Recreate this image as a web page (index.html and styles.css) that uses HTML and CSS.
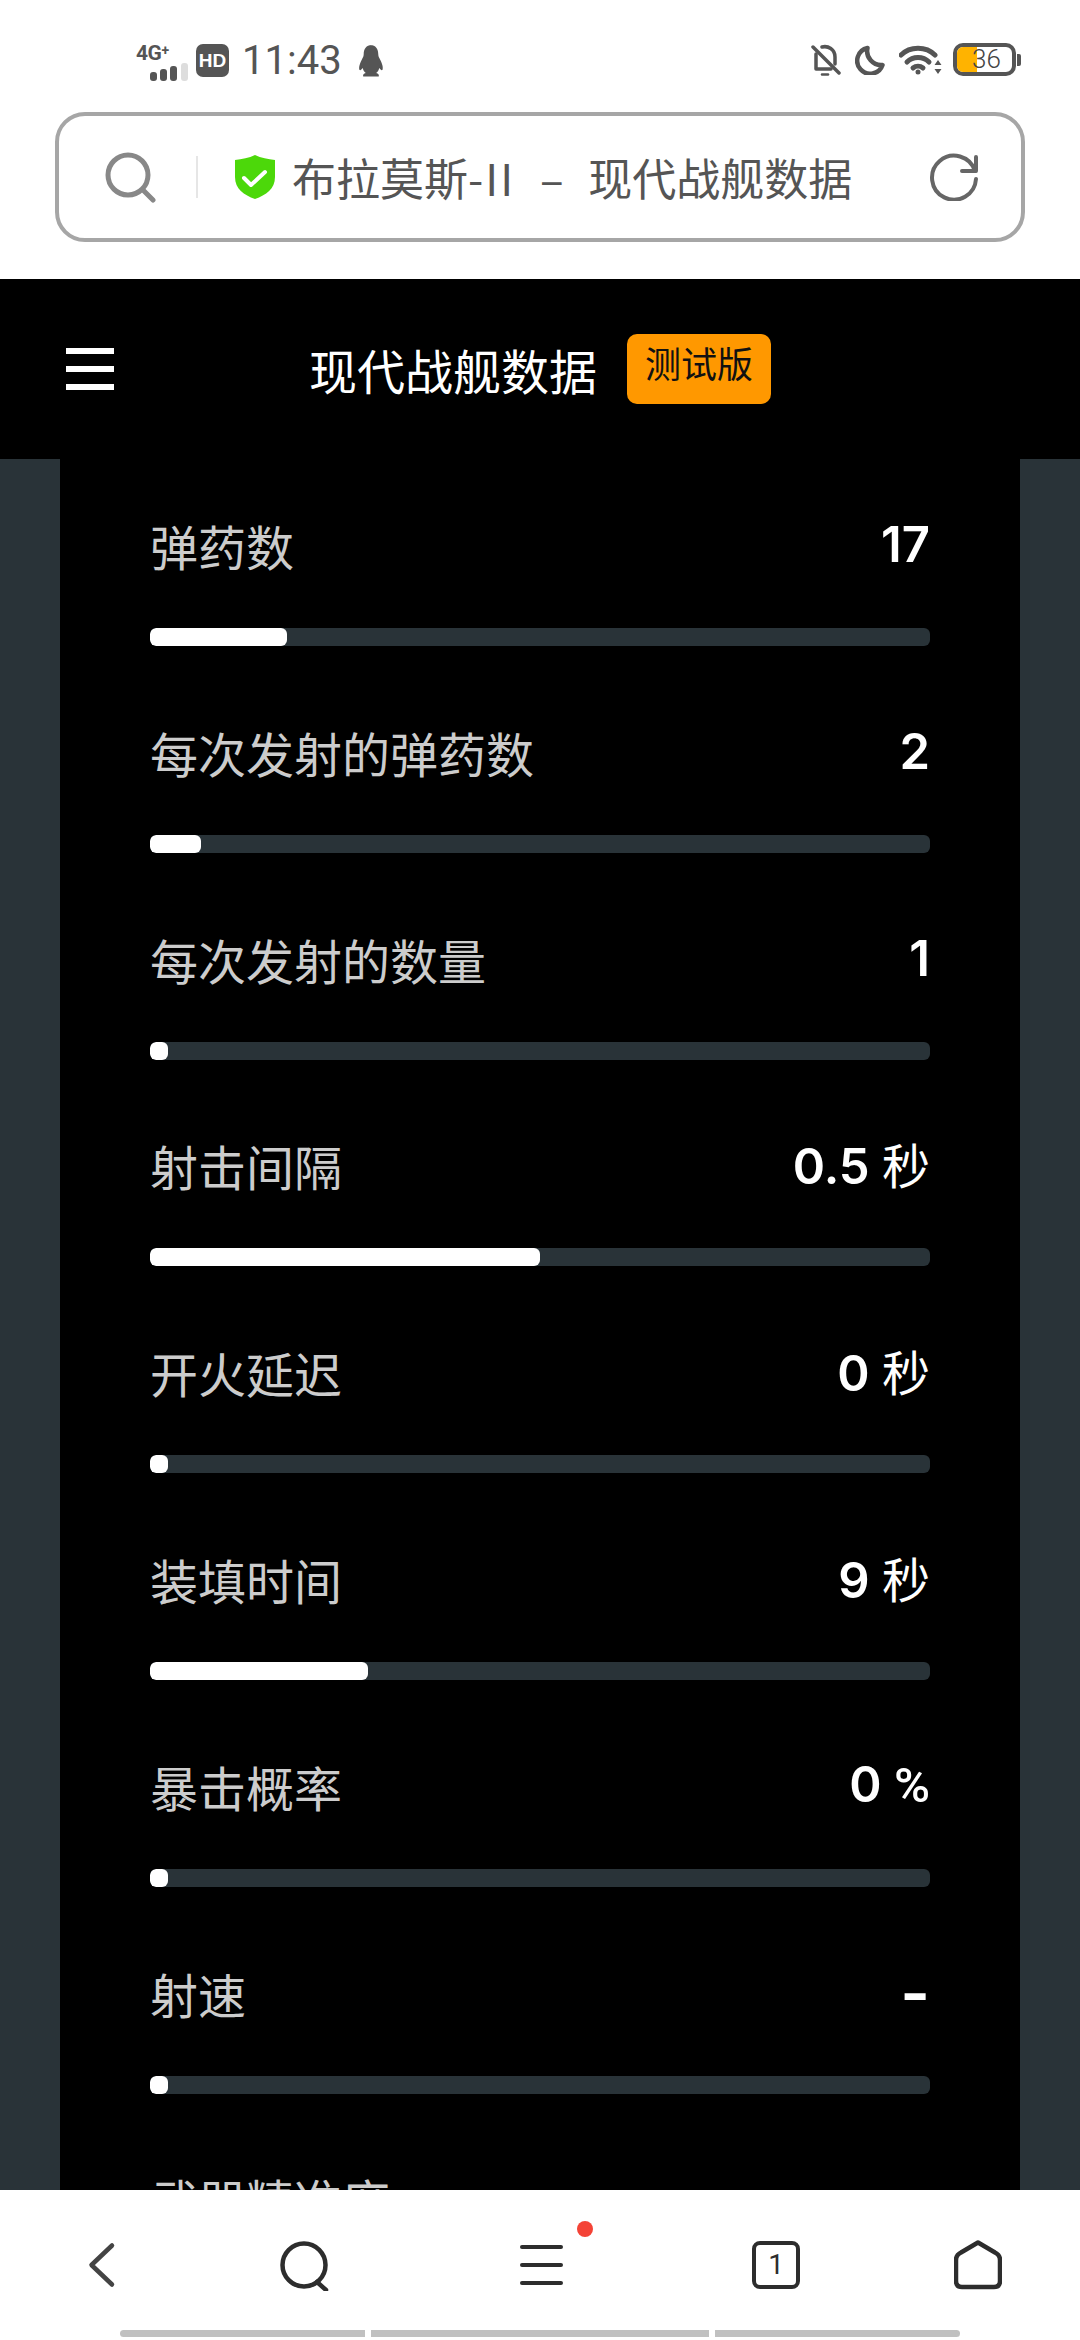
FILE: index.html
```html
<!DOCTYPE html>
<html lang="zh-CN">
<head>
    <meta charset="UTF-8">
    <meta name="viewport" content="width=device-width, initial-scale=1.0">
    <title>布拉莫斯-II - 现代战舰数据</title>
    <link rel="stylesheet" href="styles.css">
</head>
<body>
    <div class="status-bar">
        <div class="status-left">
            <div class="network">
                <span class="network-type">4G<small>+</small></span>
                <svg class="signal" width="38" height="18" viewBox="0 0 38 18">
                    <rect x="0" y="9" width="7" height="9" rx="3" fill="#555"/>
                    <rect x="10" y="6" width="7" height="12" rx="3" fill="#555"/>
                    <rect x="20" y="3" width="7" height="15" rx="3" fill="#555"/>
                    <rect x="31" y="0" width="7" height="18" rx="3" fill="#ddd"/>
                </svg>
            </div>
            <span class="hd">HD</span>
            <span class="clock">11:43</span>
            <svg class="penguin" width="27" height="32" viewBox="0 0 26 32" preserveAspectRatio="none">
                <path d="M13 0c-5 0-7.5 4-7.5 9 0 2-.5 3-2 6C1.5 19 .5 23 1.5 25c1 .5 2-.5 3-2 .5 2 1.500 4 3 5-2 .5-3 1.500-2.500 3.500h15c.5-2-.5-3-2.500-3.500 1.500-1 2.500-3 3-5 1 1.500 2 2.500 3 2 1-2 0-6-2-10-1.500-3-2-4-2-6 0-5-2.500-9-7.500-9z" fill="#555"/>
            </svg>
        </div>
        <div class="status-right">
            <svg class="bell" width="30" height="32" viewBox="0 0 30 32" fill="none" stroke="#555" stroke-width="3.500" stroke-linecap="round" stroke-linejoin="round">
                <path d="M11 3c6-1.500 13 2 13 10v7"/>
                <path d="M5 10v15h15"/>
                <path d="M2 3l26 26"/>
                <path d="M11 30.500h6" stroke-width="2.500"/>
            </svg>
            <svg class="moon" width="31" height="30" viewBox="0 0 30 30" fill="none" stroke="#555" stroke-width="4.500" stroke-linejoin="round">
                <path d="M12 3A13 13 0 1 0 27 20 14 14 0 0 1 12 3z"/>
            </svg>
            <svg class="wifi" width="43" height="30" viewBox="0 0 43 30" fill="none" stroke="#555" stroke-width="5" stroke-linecap="round">
                <path d="M2 10C11 1 27 1 36 10"/>
                <path d="M8 17C14 11 24 11 30 17"/>
                <path d="M14 23C17 20.500 21 20.500 24 23"/>
                <circle cx="19" cy="27" r="2.500" fill="#555" stroke="none"/>
                <path d="M39 15l3.500 5h-7zM39 29l3.500-5h-7z" fill="#555" stroke="none"/>
            </svg>
            <div class="battery">
                <div class="battery-body">
                    <div class="battery-level"></div>
                    <span class="battery-text">36</span>
                </div>
                <div class="battery-nub"></div>
            </div>
        </div>
    </div>

    <div class="browser-bar">
        <div class="address">
            <svg class="address-search" width="52" height="52" viewBox="0 0 52 52" fill="none" stroke="#888" stroke-width="5" stroke-linecap="round">
                <circle cx="23" cy="24" r="20"/>
                <path d="M38 39l10 10"/>
            </svg>
            <div class="address-divider"></div>
            <svg class="shield" width="40" height="44" viewBox="0 0 40 44">
                <path d="M20 0C26 3 33 4 40 5v17c0 12-9 18-20 22C9 40 0 34 0 22V5C7 4 14 3 20 0z" fill="#4cd80a"/>
                <path d="M9 23l7 7 14-13" fill="none" stroke="#fff" stroke-width="4" stroke-linecap="round" stroke-linejoin="round"/>
            </svg>
            <span class="address-text">布拉莫斯<span class="address-latin">-II</span> – 现代战舰数据</span>
            <svg class="refresh" width="48" height="48" viewBox="0 0 48 48" fill="none" stroke="#666" stroke-width="4" stroke-linecap="round" stroke-linejoin="round">
                <path d="M46 26A22 22 0 1 1 45 18"/>
                <path d="M46 4V18H32"/>
            </svg>
        </div>
    </div>

    <header class="site-header">
        <div class="burger">
            <span></span>
            <span></span>
            <span></span>
        </div>
        <h1>现代战舰数据</h1>
        <span class="beta">测试版</span>
    </header>

    <main class="page">
        <div class="stats">
            <div class="stat">
                <div class="stat-head"><span class="stat-name">弹药数</span><span class="stat-value">17</span></div>
                <div class="track"><div class="fill" style="width: 17.6%"></div></div>
            </div>
            <div class="stat">
                <div class="stat-head"><span class="stat-name">每次发射的弹药数</span><span class="stat-value">2</span></div>
                <div class="track"><div class="fill" style="width: 6.600%"></div></div>
            </div>
            <div class="stat">
                <div class="stat-head"><span class="stat-name">每次发射的数量</span><span class="stat-value">1</span></div>
                <div class="track"><div class="fill" style="width: 2.300%"></div></div>
            </div>
            <div class="stat">
                <div class="stat-head"><span class="stat-name">射击间隔</span><span class="stat-value">0.5 <span class="unit">秒</span></span></div>
                <div class="track"><div class="fill" style="width: 50%"></div></div>
            </div>
            <div class="stat">
                <div class="stat-head"><span class="stat-name">开火延迟</span><span class="stat-value">0 <span class="unit">秒</span></span></div>
                <div class="track"><div class="fill" style="width: 2.300%"></div></div>
            </div>
            <div class="stat">
                <div class="stat-head"><span class="stat-name">装填时间</span><span class="stat-value">9 <span class="unit">秒</span></span></div>
                <div class="track"><div class="fill" style="width: 28%"></div></div>
            </div>
            <div class="stat">
                <div class="stat-head"><span class="stat-name">暴击概率</span><span class="stat-value">0 <span class="percent">%</span></span></div>
                <div class="track"><div class="fill" style="width: 2.300%"></div></div>
            </div>
            <div class="stat">
                <div class="stat-head"><span class="stat-name">射速</span><span class="stat-value dash">-</span></div>
                <div class="track"><div class="fill" style="width: 2.300%"></div></div>
            </div>
            <div class="stat">
                <div class="stat-head"><span class="stat-name">武器精准度</span></div>
            </div>
        </div>
    </main>

    <nav class="bottom-nav">
        <div class="nav-icons">
            <svg width="28" height="48" viewBox="0 0 28 48" fill="none" stroke="#444" stroke-width="4.500" stroke-linecap="round" stroke-linejoin="round">
                <path d="M24 4.500L3.500 24 24 43.500"/>
            </svg>
            <svg width="50" height="52" viewBox="0 0 50 52" fill="none" stroke="#2d2d2d" stroke-width="4.500" stroke-linecap="round">
                <circle cx="24" cy="26" r="21.500"/>
                <path d="M37 43l9 8"/>
            </svg>
            <div class="nav-menu">
                <span></span>
                <span></span>
                <span></span>
                <i class="red-dot"></i>
            </div>
            <div class="nav-tabs">1</div>
            <svg width="48" height="50" viewBox="0 0 48 50" fill="none" stroke="#2d2d2d" stroke-width="4.500" stroke-linejoin="round">
                <path d="M24 2.500L41 12.500Q46 15 46 20V41Q46 47 40 47H8Q2 47 2 41V20Q2 15 7 12.500z"/>
            </svg>
        </div>
        <div class="indicator">
            <span class="seg-first"></span>
            <span class="seg-mid"></span>
            <span class="seg-last"></span>
        </div>
    </nav>
</body>
</html>
```

FILE: styles.css
```css
body {
    font-family: "Noto Sans CJK SC", "Noto Sans", sans-serif;
    background-color: #ffffff;
    margin: 0;
    padding: 0;
    width: 1080px;
    height: 2340px;
    display: flex;
    flex-direction: column;
    overflow: hidden;
}

/* status bar */
.status-bar {
    height: 112px;
    box-sizing: border-box;
    padding: 40px 59px 0 136px;
    display: flex;
    justify-content: space-between;
    align-items: flex-start;
    flex-shrink: 0;
    color: #555555;
}
.status-left {
    display: flex;
    align-items: center;
}
.network {
    width: 52px;
    display: flex;
    flex-direction: column;
}
.network-type {
    font-family: Roboto, sans-serif;
    font-size: 21px;
    font-weight: 700;
    line-height: 20px;
    letter-spacing: -0.5px;
}
.network-type small {
    font-size: 14px;
    vertical-align: 5px;
}
.signal {
    align-self: flex-end;
}
.hd {
    width: 33px;
    height: 33px;
    margin-left: 8px;
    background-color: #555555;
    border-radius: 7px;
    color: #ffffff;
    font-family: "Liberation Sans", sans-serif;
    font-size: 19px;
    font-weight: 700;
    line-height: 33px;
    text-align: center;
}
.clock {
    margin-left: 13px;
    font-family: Roboto, sans-serif;
    font-size: 40px;
    line-height: 38px;
}
.penguin {
    margin-left: 16px;
}
.status-right {
    display: flex;
    align-items: center;
    margin-top: 3px;
}
.moon {
    margin-left: 14px;
}
.wifi {
    margin-left: 13px;
}
.battery {
    margin-left: 11px;
    display: flex;
    align-items: center;
}
.battery-body {
    position: relative;
    width: 63px;
    height: 33px;
    box-sizing: border-box;
    border: 4px solid #555555;
    border-radius: 10px;
    overflow: hidden;
}
.battery-level {
    width: 20px;
    height: 100%;
    background-color: #ffb300;
}
.battery-text {
    position: absolute;
    top: 0;
    left: 15px;
    font-family: Roboto, sans-serif;
    font-size: 26px;
    font-weight: 300;
    line-height: 25px;
    color: #444444;
}
.battery-nub {
    width: 4px;
    height: 12px;
    margin-left: 1px;
    background-color: #555555;
    border-radius: 0 2px 2px 0;
}

/* address bar */
.browser-bar {
    height: 167px;
    box-sizing: border-box;
    padding: 0 55px;
    flex-shrink: 0;
}
.address {
    height: 130px;
    box-sizing: border-box;
    border: 4px solid #a6a6a6;
    border-radius: 30px;
    padding-left: 46px;
    display: flex;
    align-items: center;
}
.address-divider {
    width: 2px;
    height: 42px;
    margin-left: 39px;
    background-color: #e6e6e6;
}
.shield {
    margin-left: 37px;
}
.address-text {
    margin-left: 17px;
    width: 570px;
    font-size: 44px;
    line-height: 60px;
    color: #555555;
    white-space: nowrap;
    word-spacing: 15px;
}
.address-latin {
    letter-spacing: 2px;
}
.refresh {
    margin-left: 68px;
}

/* site header */
.site-header {
    height: 180px;
    box-sizing: border-box;
    padding: 55px 0 0 66px;
    background-color: #000000;
    display: flex;
    align-items: flex-start;
    flex-shrink: 0;
}
.burger {
    width: 48px;
    margin-top: 14px;
    display: flex;
    flex-direction: column;
    gap: 12px;
}
.burger span {
    height: 6px;
    background-color: #ffffff;
}
h1 {
    margin: 3px 0 0 195px;
    font-size: 48px;
    font-weight: 400;
    line-height: 64px;
    color: #ffffff;
}
.beta {
    width: 144px;
    height: 70px;
    margin-left: 30px;
    background-color: #ff9800;
    border-radius: 10px;
    color: #111111;
    font-size: 36px;
    line-height: 57px;
    text-align: center;
}

/* stat list */
.page {
    flex: 1;
    min-height: 0;
    padding: 0 60px;
    background-color: #293338;
    overflow: hidden;
}
.stats {
    height: 100%;
    box-sizing: border-box;
    padding: 54px 90px 0;
    background-color: #000000;
    overflow: hidden;
}
.stat {
    height: 206.8px;
}
.stat-head {
    height: 72px;
    display: flex;
    justify-content: space-between;
    align-items: center;
}
.stat-name {
    margin-top: -8px;
    font-size: 48px;
    line-height: 72px;
    color: #cccccc;
}
.stat-value {
    margin-top: -8px;
    font-family: Inter, "Noto Sans CJK SC", sans-serif;
    font-size: 49px;
    font-weight: 600;
    line-height: 72px;
    color: #ffffff;
}
.unit {
    font-family: "Noto Sans CJK SC", sans-serif;
    font-size: 48px;
    font-weight: 400;
}
.percent {
    font-family: Roboto, sans-serif;
    font-weight: 500;
}
.dash {
    font-size: 64px;
}
.track {
    height: 18px;
    margin-top: 43px;
    background-color: #293338;
    border-radius: 6px;
    overflow: hidden;
}
.fill {
    height: 100%;
    background-color: #ffffff;
    border-radius: 6px;
}

/* bottom nav */
.bottom-nav {
    height: 150px;
    box-sizing: border-box;
    padding: 49px 0 3px;
    background-color: #ffffff;
    display: flex;
    flex-direction: column;
    justify-content: space-between;
    flex-shrink: 0;
}
.nav-icons {
    display: grid;
    grid-template-columns: 203px 203px 270px 200px 204px;
    justify-items: center;
    align-items: center;
}
.nav-menu {
    position: relative;
    width: 43px;
    display: flex;
    flex-direction: column;
    gap: 14px;
}
.nav-menu span {
    height: 4px;
    background-color: #2d2d2d;
    border-radius: 2px;
}
.red-dot {
    position: absolute;
    top: -24px;
    right: -30px;
    width: 16px;
    height: 16px;
    background-color: #f44336;
    border-radius: 50%;
}
.nav-tabs {
    width: 48px;
    height: 48px;
    box-sizing: border-box;
    border: 4px solid #2d2d2d;
    border-radius: 8px;
    color: #2d2d2d;
    font-family: Roboto, sans-serif;
    font-size: 28px;
    line-height: 40px;
    text-align: center;
}
.indicator {
    height: 7px;
    padding-left: 120px;
    display: flex;
    gap: 6px;
}
.indicator span {
    background-color: #c0c0c0;
}
.seg-first {
    width: 245px;
    border-radius: 4px 0 0 4px;
}
.seg-mid {
    width: 338px;
}
.seg-last {
    width: 245px;
    border-radius: 0 4px 4px 0;
}
```
